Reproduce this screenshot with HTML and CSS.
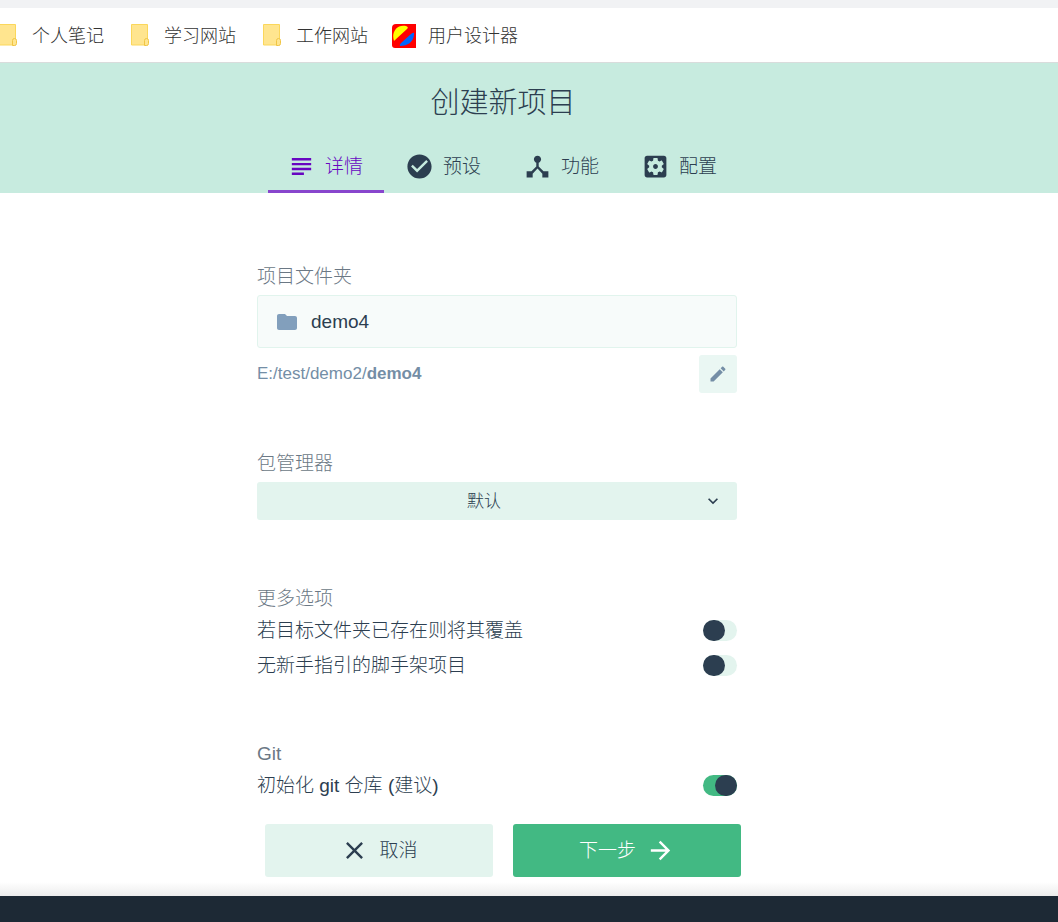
FILE: index.html
```html
<!DOCTYPE html>
<html lang="zh-CN">
<head>
    <meta charset="UTF-8">
    <meta name="viewport" content="width=device-width, initial-scale=1.0">
    <title>创建新项目</title>
    <link rel="stylesheet" href="styles.css">
</head>
<body>
    <nav class="bookmarks">
        <a href="#">
            <svg viewBox="0 0 24 24"><path class="note" d="M3.500 .500h16V21h-16z"/><path class="curl" d="M16.500 21.500v-5q0-2 2-2t2 2v3q0 2-2 2z"/></svg>
            个人笔记
        </a>
        <a href="#">
            <svg viewBox="0 0 24 24"><path class="note" d="M3.500 .500h16V21h-16z"/><path class="curl" d="M16.500 21.500v-5q0-2 2-2t2 2v3q0 2-2 2z"/></svg>
            学习网站
        </a>
        <a href="#">
            <svg viewBox="0 0 24 24"><path class="note" d="M3.500 .500h16V21h-16z"/><path class="curl" d="M16.500 21.500v-5q0-2 2-2t2 2v3q0 2-2 2z"/></svg>
            工作网站
        </a>
        <a href="#">
            <svg viewBox="0 0 24 24">
                <path fill="#f00" d="M4 0h20v24H3q-3 0-3-3V4q0-4 4-4z"/>
                <path fill="#ff0" d="M2 17C-1 8 5 0 14 2q3 1 1 3L3 16z"/>
                <path fill="#06f" d="M8 22Q7 21 9 19L19 10q4-3 3 1c-1 7-6 11-14 11z"/>
            </svg>
            用户设计器
        </a>
    </nav>

    <header class="header">
        <h1>创建新项目</h1>
        <div class="tabs" role="tablist">
            <button class="tab selected" role="tab" aria-selected="true">
                <svg class="icon" viewBox="0 0 24 24"><path d="M14 17H4v2h10v-2zm6-8H4v2h16V9zM4 15h16v-2H4v2zM4 5v2h16V5H4z"/></svg>
                详情
            </button>
            <button class="tab" role="tab">
                <svg class="icon" viewBox="0 0 24 24"><path d="M12 2C6.480 2 2 6.480 2 12s4.480 10 10 10 10-4.480 10-10S17.520 2 12 2zm-2 15l-5-5 1.410-1.410L10 14.170l7.590-7.590L19 8l-9 9z"/></svg>
                预设
            </button>
            <button class="tab" role="tab">
                <svg class="icon" viewBox="0 0 24 24"><path d="M17 16l-4-4V8.820C14.160 8.400 15 7.300 15 6c0-1.660-1.340-3-3-3S9 4.340 9 6c0 1.300.840 2.400 2 2.820V12l-4 4H3v5h5v-3.050l4-4.200 4 4.200V21h5v-5h-4z"/></svg>
                功能
            </button>
            <button class="tab" role="tab">
                <svg class="icon" viewBox="0 0 24 24"><path d="M12 10c-1.100 0-2 .9-2 2s.9 2 2 2 2-.9 2-2-.9-2-2-2zm7-7H5c-1.110 0-2 .9-2 2v14c0 1.100.890 2 2 2h14c1.110 0 2-.9 2-2V5c0-1.100-.890-2-2-2zm-1.750 9c0 .230-.020.460-.050.680l1.480 1.160c.130.110.170.300.080.450l-1.400 2.420c-.090.150-.270.210-.430.150l-1.740-.7c-.360.280-.760.510-1.180.690l-.260 1.850c-.030.170-.180.300-.350.300h-2.800c-.170 0-.320-.130-.350-.290l-.260-1.850c-.430-.180-.820-.410-1.180-.690l-1.740.7c-.160.060-.340 0-.430-.150l-1.400-2.420c-.090-.150-.050-.340.080-.450l1.480-1.160c-.030-.230-.050-.460-.050-.690 0-.230.020-.460.050-.680l-1.480-1.160c-.130-.110-.170-.300-.080-.450l1.400-2.420c.090-.150.270-.210.430-.150l1.740.7c.360-.280.760-.510 1.180-.690l.260-1.850c.030-.170.180-.300.350-.300h2.800c.170 0 .320.130.350.290l.260 1.850c.430.180.820.410 1.180.690l1.740-.7c.160-.060.340 0 .430.150l1.400 2.420c.090.150.050.340-.080.450l-1.480 1.160c.030.230.050.460.050.690z"/></svg>
                配置
            </button>
        </div>
    </header>

    <main class="content">
        <form class="form">
            <div class="field">
                <label class="title" for="folder">项目文件夹</label>
                <div class="folder-input">
                    <svg viewBox="0 0 24 24"><path d="M10 4H4c-1.100 0-2 .9-2 2v12c0 1.100.9 2 2 2h16c1.100 0 2-.9 2-2V8c0-1.100-.9-2-2-2h-8l-2-2z"/></svg>
                    <input type="text" id="folder" value="demo4">
                </div>
                <div class="path">
                    <span>E:/test/demo2/<b>demo4</b></span>
                    <button type="button" class="edit" aria-label="编辑路径">
                        <svg viewBox="0 0 24 24"><path d="M3 17.250V21h3.750L17.810 9.940l-3.750-3.750L3 17.250zM20.710 7.040c.390-.390.390-1.020 0-1.410l-2.340-2.340c-.390-.390-1.020-.390-1.410 0l-1.830 1.830 3.750 3.750 1.830-1.830z"/></svg>
                    </button>
                </div>
            </div>

            <div class="field manager">
                <label class="title" for="manager">包管理器</label>
                <div class="select">
                    <select id="manager">
                        <option>默认</option>
                    </select>
                    <svg viewBox="0 0 24 24"><path d="M7.410 8.590L12 13.170l4.590-4.580L18 10l-6 6-6-6z"/></svg>
                </div>
            </div>

            <div class="field">
                <div class="title">更多选项</div>
                <label class="switch">若目标文件夹已存在则将其覆盖 <input type="checkbox"></label>
                <label class="switch">无新手指引的脚手架项目 <input type="checkbox"></label>
            </div>

            <div class="field">
                <div class="title">Git</div>
                <label class="switch">初始化 git 仓库 (建议) <input type="checkbox" checked></label>
            </div>
        </form>
    </main>

    <div class="actions">
        <button class="button">
            <svg class="icon" viewBox="0 0 24 24"><path d="M19 6.410L17.590 5 12 10.590 6.410 5 5 6.410 10.590 12 5 17.590 6.410 19 12 13.410 17.590 19 19 17.590 13.410 12z"/></svg>
            取消
        </button>
        <button class="button primary">
            下一步
            <svg class="icon" viewBox="0 0 24 24"><path d="M12 4l-1.410 1.410L16.170 11H4v2h12.170l-5.580 5.590L12 20l8-8z"/></svg>
        </button>
    </div>

    <footer class="status-bar"></footer>
</body>
</html>
```
FILE: styles.css
```css
* {
    box-sizing: border-box;
}

body {
    margin: 0;
    min-height: 100vh;
    display: flex;
    flex-direction: column;
    font-family: "Liberation Sans", "Noto Sans CJK SC", sans-serif;
    font-size: 19px;
    font-weight: 300;
    line-height: 28px;
    color: #2c3e50;
    background: #fff;
}

button,
input,
select {
    font: inherit;
    color: inherit;
    border: none;
    margin: 0;
    padding: 0;
}

button {
    cursor: pointer;
}

svg {
    fill: currentColor;
    flex: none;
}

.icon {
    width: 29px;
    height: 29px;
}

/* bookmarks */
.bookmarks {
    display: flex;
    gap: 24px;
    height: 63px;
    margin-left: -4px;
    padding-top: 2px;
    border-top: 8px solid #f1f2f4;
    border-bottom: 1px solid #d9dcdc;
    overflow: hidden;
}

.bookmarks a {
    display: flex;
    align-items: center;
    gap: 12px;
    font-size: 18px;
    color: #333;
    text-decoration: none;
    white-space: nowrap;
}

.bookmarks svg {
    width: 24px;
    height: 24px;
}

.note {
    fill: #ffe58f;
    stroke: #fbd75b;
}

.curl {
    fill: #ffe58f;
    stroke: #f0c544;
}

/* header */
.header {
    height: 130px;
    padding-right: 52px;
    display: flex;
    flex-direction: column;
    align-items: center;
    justify-content: space-between;
    background: #c7ebdf;
}

h1 {
    margin: 19px 0 0;
    font-size: 29px;
    font-weight: 300;
    line-height: 42px;
}

.tabs {
    display: grid;
    grid-template-columns: repeat(4, 1fr);
    gap: 2px;
    width: 470px;
}

.tab {
    display: flex;
    align-items: center;
    justify-content: center;
    gap: 9px;
    height: 53px;
    padding-right: 2px;
    background: none;
    border-top: 3px solid transparent;
    border-bottom: 3px solid transparent;
}

.tab.selected {
    color: #6806c1;
    border-bottom-color: #8846cd;
}

/* form */
.content {
    flex: 1;
    padding: 70px 64px 19px 0;
}

.form {
    width: 480px;
    margin: 0 auto;
    display: flex;
    flex-direction: column;
    gap: 57px;
}

.title {
    display: block;
    color: #6b7885;
}

label.title {
    margin-bottom: 4px;
}

.folder-input {
    display: flex;
    align-items: center;
    gap: 12px;
    height: 53px;
    padding: 0 17px;
    background: #f7fbfa;
    border: 1px solid #e1f4ed;
    border-radius: 3px;
}

.folder-input svg {
    width: 24px;
    height: 24px;
    fill: #829fbc;
}

.folder-input input {
    flex: 1;
    min-width: 0;
    background: none;
    outline: none;
}

.path {
    display: flex;
    align-items: center;
    justify-content: space-between;
    margin-top: 7px;
    font-size: 17px;
    color: #748ea6;
}

.path b {
    font-weight: 700;
}

.edit {
    display: flex;
    align-items: center;
    justify-content: center;
    width: 38px;
    height: 38px;
    background: #eaf7f3;
    border-radius: 3px;
}

.edit svg,
.select svg {
    width: 20px;
    height: 20px;
}

.manager {
    padding-bottom: 8px;
}

.select {
    display: grid;
    align-items: center;
    background: #e3f4ee;
    border-radius: 3px;
}

.select select,
.select svg {
    grid-area: 1 / 1;
}

.select select {
    appearance: none;
    width: 100%;
    height: 38px;
    padding-top: 2px;
    padding-right: 26px;
    font-size: 17px;
    text-align: center;
    text-align-last: center;
    background: none;
}

.select svg {
    justify-self: end;
    margin-right: 14px;
    pointer-events: none;
}

.switch {
    display: flex;
    align-items: center;
    justify-content: space-between;
    height: 35px;
    cursor: pointer;
}

.switch input {
    appearance: none;
    display: flex;
    width: 34px;
    height: 21px;
    background: #e3f4ee;
    border-radius: 11px;
}

.switch input::before {
    content: "";
    width: 22px;
    height: 21px;
    background: #2c3e50;
    border-radius: 11px;
}

.switch input:checked {
    justify-content: flex-end;
    background: #42b983;
}

/* bottom */
.actions {
    display: flex;
    justify-content: center;
    gap: 20px;
    padding: 0 52px 19px 0;
    background: linear-gradient(to top, #ececec, #fff 14px);
}

.button {
    display: flex;
    align-items: center;
    justify-content: center;
    gap: 10px;
    width: 228px;
    height: 53px;
    background: #e3f4ee;
    border-radius: 3px;
}

.button.primary {
    color: #fff;
    background: #42b983;
}

.status-bar {
    height: 26px;
    background: #1d2935;
}
```
